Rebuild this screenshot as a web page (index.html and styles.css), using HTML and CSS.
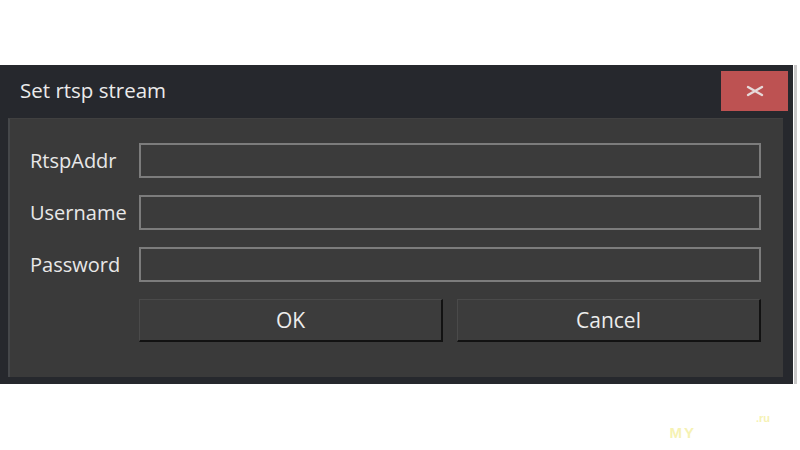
FILE: index.html
```html
<!DOCTYPE html>
<html>
<head>
<meta charset="utf-8">
<link rel="stylesheet" href="styles.css">
</head>
<body>
<div class="page">
  <div class="dialog">
    <div class="titlebar">
      <span class="title">Set rtsp stream</span>
      <div class="close">
        <svg width="20" height="12" viewBox="0 0 20 12"><path d="M3 2 L17 10 M3 10 L17 2" stroke="#e6dada" stroke-width="2.4" stroke-linecap="round" fill="none"/></svg>
      </div>
    </div>
    <div class="panel">
      <div class="form">
        <label class="label">RtspAddr</label><div class="input"></div>
        <label class="label">Username</label><div class="input"></div>
        <label class="label">Password</label><div class="input"></div>
        <div></div>
        <div class="buttons">
          <div class="btn">OK</div>
          <div class="btn">Cancel</div>
        </div>
      </div>
    </div>
  </div>
  <div class="edge"></div>
</div>
<div class="mark"><span class="my">MY</span><span class="ru">.ru</span></div>
</body>
</html>
```
FILE: styles.css
```css
html, body {
  margin: 0;
  padding: 0;
  background: #ffffff;
  width: 800px;
  height: 450px;
  overflow: hidden;
  font-family: "Open Sans", "Noto Sans", sans-serif;
}
.page {
  margin-top: 65px;
  display: flex;
}
.dialog {
  width: 793px;
  height: 319px;
  background: #26282d;
  display: flex;
  flex-direction: column;
  padding: 0 10px 7px 8px;
  box-sizing: border-box;
}
.edge {
  width: 3px;
  margin-left: 1px;
  background: #c9c9c9;
}
.titlebar {
  height: 53px;
  display: flex;
  align-items: flex-start;
  justify-content: space-between;
}
.title {
  color: #ebebeb;
  font-size: 20.5px;
  margin-left: 12px;
  margin-top: 11px;
}
.close {
  width: 67px;
  height: 40px;
  margin-top: 6px;
  margin-right: -5px;
  background: #bd5252;
  display: flex;
  align-items: center;
  justify-content: center;
}
.panel {
  flex: 1;
  background: #3a3a3a;
  border-left: 2px solid #45474a;
  border-top: 1px solid #404040;
  padding: 24px 22px 0 20px;
  box-sizing: border-box;
}
.form {
  display: grid;
  grid-template-columns: 109px 1fr;
  row-gap: 17px;
  align-items: center;
}
.label {
  color: #e8e8e8;
  font-size: 20px;
}
.input {
  height: 35px;
  box-sizing: border-box;
  border: 2px solid #7c7c7c;
  background: #3b3b3b;
}
.buttons {
  display: flex;
  gap: 14px;
  margin-top: 0;
}
.btn {
  flex: 1;
  height: 43px;
  box-sizing: border-box;
  background: #3c3c3c;
  border-top: 1px solid #4a4a4a;
  border-left: 1px solid #4a4a4a;
  border-right: 2px solid #121212;
  border-bottom: 2px solid #121212;
  color: #ececec;
  font-size: 21px;
  display: flex;
  align-items: center;
  justify-content: center;
}
.mark {
  display: flex;
  justify-content: flex-end;
  align-items: flex-start;
  gap: 60px;
  padding-right: 30px;
  margin-top: 28px;
  color: #f6f2b4;
  font-family: "Liberation Sans", sans-serif;
  font-weight: bold;
}
.my { font-size: 15px; margin-top: 12px; letter-spacing: 2px; }
.ru { font-size: 11px; }
```
